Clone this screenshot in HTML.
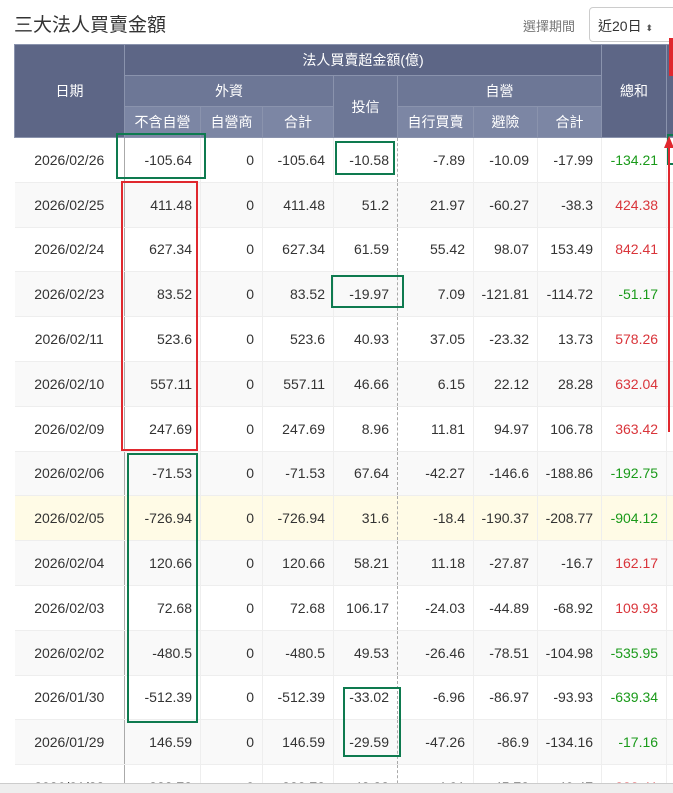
<!DOCTYPE html>
<html style="overflow:hidden;width:673px;height:793px"><head><meta charset="utf-8"><style>
*{margin:0;padding:0;box-sizing:border-box}
body{width:673px;height:793px;overflow:hidden;background:#fff;font-family:"Liberation Sans","Noto Sans CJK TC",sans-serif;position:relative}
.t{position:absolute;left:14px;top:10px;font-size:19px;color:#333}
.lab{position:absolute;left:523px;top:16px;font-size:13px;color:#777}
.sel{position:absolute;left:589px;top:7px;width:90px;height:35px;border:1px solid #ccc;border-radius:4px;font-size:14px;color:#333;padding:8px 0 0 8px}
table{position:absolute;left:14px;top:44px;border-collapse:collapse;table-layout:fixed;width:670px}
th{color:#fff;font-weight:normal;font-size:14px;height:31px;border:1px solid #8a93ad;text-align:center}
.h1{background:#5d6686}.h2{background:#6d7796}.h3{background:#7c86a4}
td{height:44.8px;font-size:14px;color:#333;text-align:right;padding-right:8px;border-right:1px solid #eee;border-bottom:1px solid #eee}
td:first-child{text-align:center;padding-right:0;border-right:1px solid #aaa}
tr:nth-child(even) td{background:#f9f9f9}
tr.y td{background:#fffbe6}
td.s{border-left:1px dashed #aaa;border-right:1px dashed #aaa}
td.tot{border-left:1px dashed #aaa}
.g{color:#1a9a1a}.r{color:#d9343a}
.b{position:absolute;border:2px solid #0e7a4f}
.rb{position:absolute;border:2px solid #e0282e}
.bar{position:absolute;left:0;top:783px;width:673px;height:10px;background:#eee;border-top:1px solid #ccc;z-index:5}
</style></head><body>
<div class="t">三大法人買賣金額</div>
<div class="lab">選擇期間</div>
<div class="sel">近20日 <span style="font-size:9px;color:#555">⬍</span></div>
<table>
<colgroup><col style="width:110px"><col style="width:76px"><col style="width:62px"><col style="width:71px"><col style="width:64px"><col style="width:76px"><col style="width:64px"><col style="width:64px"><col style="width:65px"><col style="width:18px"></colgroup>
<thead>
<tr><th class="h1" rowspan="3">日期</th><th class="h1" colspan="7">法人買賣超金額(億)</th><th class="h1" rowspan="3">總和</th><th class="h1" rowspan="3"></th></tr>
<tr><th class="h2" colspan="3">外資</th><th class="h2" rowspan="2">投信</th><th class="h2" colspan="3">自營</th></tr>
<tr><th class="h3">不含自營</th><th class="h3">自營商</th><th class="h3">合計</th><th class="h3">自行買賣</th><th class="h3">避險</th><th class="h3">合計</th></tr>
</thead>
<tbody>
<tr><td>2026/02/26</td><td>-105.64</td><td>0</td><td>-105.64</td><td class="s">-10.58</td><td>-7.89</td><td>-10.09</td><td>-17.99</td><td class="tot g">-134.21</td><td></td></tr>
<tr><td>2026/02/25</td><td>411.48</td><td>0</td><td>411.48</td><td class="s">51.2</td><td>21.97</td><td>-60.27</td><td>-38.3</td><td class="tot r">424.38</td><td></td></tr>
<tr><td>2026/02/24</td><td>627.34</td><td>0</td><td>627.34</td><td class="s">61.59</td><td>55.42</td><td>98.07</td><td>153.49</td><td class="tot r">842.41</td><td></td></tr>
<tr><td>2026/02/23</td><td>83.52</td><td>0</td><td>83.52</td><td class="s">-19.97</td><td>7.09</td><td>-121.81</td><td>-114.72</td><td class="tot g">-51.17</td><td></td></tr>
<tr><td>2026/02/11</td><td>523.6</td><td>0</td><td>523.6</td><td class="s">40.93</td><td>37.05</td><td>-23.32</td><td>13.73</td><td class="tot r">578.26</td><td></td></tr>
<tr><td>2026/02/10</td><td>557.11</td><td>0</td><td>557.11</td><td class="s">46.66</td><td>6.15</td><td>22.12</td><td>28.28</td><td class="tot r">632.04</td><td></td></tr>
<tr><td>2026/02/09</td><td>247.69</td><td>0</td><td>247.69</td><td class="s">8.96</td><td>11.81</td><td>94.97</td><td>106.78</td><td class="tot r">363.42</td><td></td></tr>
<tr><td>2026/02/06</td><td>-71.53</td><td>0</td><td>-71.53</td><td class="s">67.64</td><td>-42.27</td><td>-146.6</td><td>-188.86</td><td class="tot g">-192.75</td><td></td></tr>
<tr class="y"><td>2026/02/05</td><td>-726.94</td><td>0</td><td>-726.94</td><td class="s">31.6</td><td>-18.4</td><td>-190.37</td><td>-208.77</td><td class="tot g">-904.12</td><td></td></tr>
<tr><td>2026/02/04</td><td>120.66</td><td>0</td><td>120.66</td><td class="s">58.21</td><td>11.18</td><td>-27.87</td><td>-16.7</td><td class="tot r">162.17</td><td></td></tr>
<tr><td>2026/02/03</td><td>72.68</td><td>0</td><td>72.68</td><td class="s">106.17</td><td>-24.03</td><td>-44.89</td><td>-68.92</td><td class="tot r">109.93</td><td></td></tr>
<tr><td>2026/02/02</td><td>-480.5</td><td>0</td><td>-480.5</td><td class="s">49.53</td><td>-26.46</td><td>-78.51</td><td>-104.98</td><td class="tot g">-535.95</td><td></td></tr>
<tr><td>2026/01/30</td><td>-512.39</td><td>0</td><td>-512.39</td><td class="s">-33.02</td><td>-6.96</td><td>-86.97</td><td>-93.93</td><td class="tot g">-639.34</td><td></td></tr>
<tr><td>2026/01/29</td><td>146.59</td><td>0</td><td>146.59</td><td class="s">-29.59</td><td>-47.26</td><td>-86.9</td><td>-134.16</td><td class="tot g">-17.16</td><td></td></tr>
<tr><td>2026/01/28</td><td>333.73</td><td>0</td><td>333.73</td><td class="s">43.88</td><td>4.01</td><td>45.73</td><td>49.47</td><td class="tot r">388.41</td><td></td></tr>
</tbody></table>
<div class="b" style="left:116px;top:133px;width:90px;height:46px"></div>
<div class="b" style="left:335px;top:141px;width:60px;height:34px"></div>
<div class="b" style="left:667px;top:134px;width:10px;height:31px"></div>
<div class="rb" style="left:121px;top:181px;width:77px;height:270px"></div>
<div class="b" style="left:331px;top:275px;width:73px;height:33px"></div>
<div class="b" style="left:127px;top:453px;width:71px;height:270px"></div>
<div class="b" style="left:343px;top:687px;width:58px;height:70px"></div>
<div style="position:absolute;left:669px;top:38px;width:4px;height:38px;background:#e0282e"></div>
<div style="position:absolute;left:668px;top:146px;width:2px;height:286px;background:#e0282e"></div>
<div style="position:absolute;left:664px;top:136px;width:0;height:0;border-left:5px solid transparent;border-right:5px solid transparent;border-bottom:12px solid #e0282e"></div>
<div class="bar"></div>
</body></html>
